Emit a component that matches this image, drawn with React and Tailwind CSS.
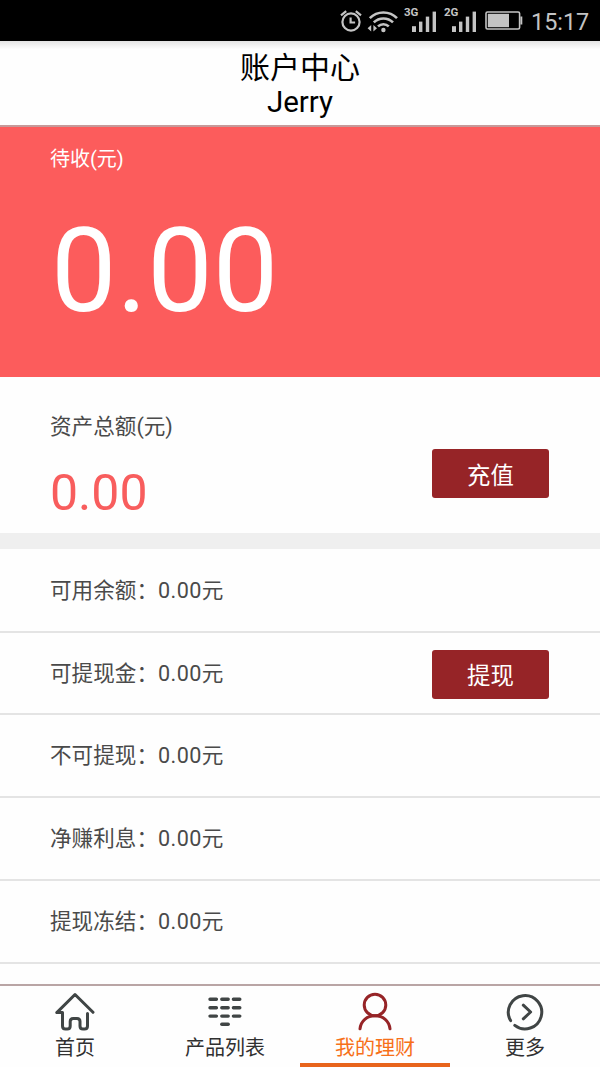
import React from "react";

const rows = [
  { label: "可用余额", value: "0.00", height: "h-[84px]" },
  { label: "可提现金", value: "0.00", height: "h-[82px]", action: "提现" },
  { label: "不可提现", value: "0.00", height: "h-[83px]" },
  { label: "净赚利息", value: "0.00", height: "h-[83px]" },
  { label: "提现冻结", value: "0.00", height: "h-[83px]" },
];

const AlarmIcon = () => (
  <svg width="22" height="24" viewBox="0 0 22 24" fill="none" stroke="#c4c4c4" strokeWidth="2.2">
    <circle cx="11" cy="13" r="8.6" />
    <path d="M10.6 8.5v5h4.5" />
    <path d="M1 6.4 6.2 2.2M21 6.4 15.8 2.2" />
  </svg>
);

const WifiIcon = () => (
  <svg width="32" height="24" viewBox="0 0 32 24" fill="none" stroke="#c4c4c4" strokeWidth="2.6">
    <path d="M2.8 8.2a19 19 0 0 1 27.2 0" />
    <path d="M6.8 12.4a13.6 13.6 0 0 1 19.2 0" />
    <path d="M11 16.4a7.8 7.8 0 0 1 10.8 0" />
    <circle cx="16.4" cy="20" r="2.2" fill="#c4c4c4" stroke="none" />
    <path d="M4.2 15v6.4L.6 18.2zM6.4 15v6.4l3.6-3.2z" fill="#c4c4c4" stroke="none" />
  </svg>
);

const Signal = ({ label }) => (
  <div className="relative h-[26px] w-[34px]">
    <span className="absolute left-0 -top-px text-[11.5px] leading-[10px] font-bold">{label}</span>
    <svg width="34" height="26" viewBox="0 0 34 26" fill="#c4c4c4">
      <rect x="8" y="18.2" width="4" height="5.8" />
      <rect x="15" y="13.6" width="3.4" height="10.4" />
      <rect x="21.8" y="8.6" width="3.4" height="15.4" />
      <rect x="28.6" y="3.6" width="3.4" height="20.4" />
    </svg>
  </div>
);

const BatteryIcon = () => (
  <svg width="38" height="20" viewBox="0 0 38 20">
    <rect x="1" y="1" width="33.6" height="17" rx="1.5" fill="none" stroke="#c4c4c4" strokeWidth="1.6" />
    <rect x="2.8" y="2.8" width="21.2" height="13.4" fill="#c4c4c4" />
    <path d="M35.4 5.5h1.9v8h-1.9z" fill="#c4c4c4" />
  </svg>
);

const HomeIcon = () => (
  <svg width="44" height="42" viewBox="0 0 44 42" fill="none" stroke="#404545" strokeWidth="3" strokeLinecap="round" strokeLinejoin="round">
    <path d="M40 20.3 22 2.5 3.8 20.6h5.7V34q0 3 3 3h1.7q3 0 3-3v-4.6q0-3 3-3H24q3 0 3 3V34q0 3 3 3h1.5q3 0 3-3V21.5" />
  </svg>
);

const ListIcon = () => (
  <svg width="44" height="42" viewBox="0 0 44 42" fill="none" stroke="#404545" strokeWidth="3.4" strokeLinecap="round">
    <path d="M7 7.3h6.4M18.8 7.3h6.4M30.4 7.3h6.4" />
    <path d="M7 15.7h6.4M18.8 15.7h6.4M30.4 15.7h6.4" />
    <path d="M7 24.1h6.4M18.8 24.1h6.4M30.4 24.1h6.4" />
    <path d="M18.8 32.3h6.4" />
  </svg>
);

const UserIcon = () => (
  <svg width="44" height="42" viewBox="0 0 44 42" fill="none" stroke="#962427" strokeWidth="3" strokeLinecap="round">
    <circle cx="22" cy="13" r="10.8" />
    <path d="M7 36.8C7.8 28.8 14 23.8 22 23.8s14.2 5 15 13" />
  </svg>
);

const MoreIcon = () => (
  <svg width="44" height="42" viewBox="0 0 44 42" fill="none" stroke="#404545" strokeWidth="3" strokeLinecap="round" strokeLinejoin="round">
    <path d="M7.6 28.6A16.7 16.7 0 1 1 11.8 33.4" />
    <path d="M20.3 13.2 27.6 20l-7.3 6.8" />
  </svg>
);

const tabs = [
  { name: "首页", icon: <HomeIcon /> },
  { name: "产品列表", icon: <ListIcon /> },
  { name: "我的理财", icon: <UserIcon />, active: true },
  { name: "更多", icon: <MoreIcon /> },
];

const ActionButton = ({ children }) => (
  <button className="h-[49px] w-[117px] rounded-[3px] bg-[#962427] pt-[6px] text-[23.4px] leading-none text-white">
    {children}
  </button>
);

export default function App() {
  return (
    <div className="flex h-[1067px] w-[600px] flex-col overflow-hidden bg-[#fefefe] font-['Roboto','Noto_Sans_CJK_SC',sans-serif] text-[#4a4a4a]">
      <div className="flex h-[41px] shrink-0 items-center bg-black pl-[340px] text-[#c4c4c4]">
        <AlarmIcon />
        <div className="ml-[5px] mt-[2px]">
          <WifiIcon />
        </div>
        <div className="ml-[5px] flex gap-[6px]">
          <Signal label="3G" />
          <Signal label="2G" />
        </div>
        <div className="ml-[7px] mt-[1px]">
          <BatteryIcon />
        </div>
        <span className="ml-[8px] mt-[4px] text-[23.4px] leading-none">15:17</span>
      </div>

      <header className="flex h-[86px] shrink-0 flex-col items-center border-b-2 border-[#c69a9a] bg-linear-to-b from-[#e4e4e4] via-[#fefefe] via-10% to-[#fefefe] pt-[9px] text-[30px] leading-[35px] text-black">
        <h1>账户中心</h1>
        <p className="text-[29.5px]">Jerry</p>
      </header>

      <section className="h-[250px] shrink-0 bg-[#fc5c5c] pl-[51px] pt-[17px] text-white">
        <p className="-ml-px text-[20px] leading-[30px]">待收(元)</p>
        <p className="mt-[32px] text-[116.6px] leading-[130px]">0.00</p>
      </section>

      <section className="flex h-[156px] shrink-0 items-start justify-between pl-[50px] pr-[51px]">
        <div className="pt-[35px]">
          <p className="text-[21.6px] leading-[30px]">资产总额(元)</p>
          <p className="mt-[21px] text-[50px] leading-[60px] text-[#f85d5d]">0.00</p>
        </div>
        <div className="pt-[72px]">
          <ActionButton>充值</ActionButton>
        </div>
      </section>

      <div className="h-4 shrink-0 bg-[#efefef]" />

      <ul className="shrink-0">
        {rows.map((row) => (
          <li
            key={row.label}
            className={`${row.height} flex items-center justify-between border-b-2 border-[#e4e4e4] pl-[50px] pr-[51px] pt-[2px] text-[21.6px]`}
          >
            <span>
              {row.label}：<span className="tracking-[0.4px]">{row.value}</span>元
            </span>
            {row.action && <ActionButton>{row.action}</ActionButton>}
          </li>
        ))}
      </ul>

      <nav className="mt-auto grid h-[83px] shrink-0 grid-cols-4 border-t-2 border-[#b9a5a5]">
        {tabs.map((tab) => (
          <a
            key={tab.name}
            className={
              tab.active
                ? "flex flex-col items-center border-b-4 border-[#e8641b] pt-[6px] text-[#f77019]"
                : "flex flex-col items-center pt-[6px] text-[#303030]"
            }
          >
            {tab.icon}
            <span className="-mt-px text-[20px] leading-[30px]">{tab.name}</span>
          </a>
        ))}
      </nav>
    </div>
  );
}
